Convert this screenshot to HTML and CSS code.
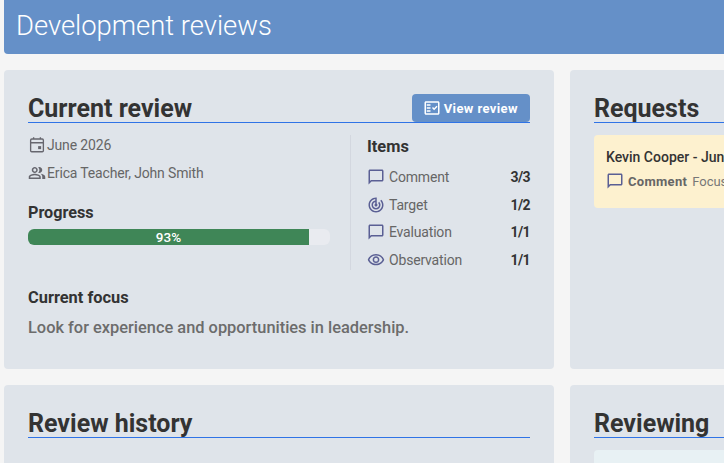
FILE: index.html
```html
<!DOCTYPE html>
<html lang="en">
<head>
<meta charset="utf-8">
<title>Development reviews</title>
<link rel="stylesheet" href="styles.css">
</head>
<body>
<div class="page">
  <header class="topbar"><h1>Development reviews</h1></header>
  <main class="grid">
    <section class="card">
      <div class="card-head">
        <h2>Current review</h2>
        <a class="btn">
          <svg class="btn-icon" viewBox="0 0 24 24"><path fill="currentColor" d="M20 3H4c-1.100 0-2 .9-2 2v14c0 1.100.9 2 2 2h16c1.100 0 2-.9 2-2V5c0-1.100-.9-2-2-2zm0 16H4V5h16v14zM19.410 10.420L17.990 9l-3.170 3.170-1.410-1.420L12 12.160 14.820 15zM5 7h5v2H5zM5 11h5v2H5zM5 15h5v2H5z"/></svg>
          View review
        </a>
      </div>
      <div class="cols">
        <div class="left">
          <div class="meta">
            <svg class="meta-icon" viewBox="0 0 24 24"><path fill="none" stroke="currentColor" stroke-width="1.800" d="M5 4h14a1.500 1.500 0 0 1 1.500 1.500v14A1.500 1.500 0 0 1 19 21H5a1.500 1.500 0 0 1-1.500-1.500v-14A1.500 1.500 0 0 1 5 4zM3.500 9h17M7.500 1.500V5M16.500 1.500V5"/><rect x="13.500" y="13.500" width="4" height="4" fill="currentColor"/></svg>
            June 2026
          </div>
          <div class="meta meta-people">
            <svg class="meta-icon" viewBox="0 0 24 24"><path fill="currentColor" d="M16.670 13.130C18.040 14.060 19 15.320 19 17v3h4v-3c0-2.180-3.570-3.470-6.330-3.870zM15 12c2.210 0 4-1.790 4-4s-1.790-4-4-4c-.47 0-.91.100-1.330.240a5.980 5.980 0 0 1 0 7.520c.420.140.860.240 1.330.240zM9 12c2.210 0 4-1.790 4-4s-1.790-4-4-4-4 1.790-4 4 1.790 4 4 4zm0-6c1.100 0 2 .9 2 2s-.9 2-2 2-2-.9-2-2 .9-2 2-2zM9 13c-2.670 0-8 1.340-8 4v3h16v-3c0-2.660-5.330-4-8-4zm6 5H3v-.990C3.200 16.290 6.300 15 9 15s5.800 1.290 6 2v1z"/></svg>
            Erica Teacher, John Smith
          </div>
          <h3 class="progress-title">Progress</h3>
          <div class="track"><div class="fill" style="width:93%">93%</div></div>
        </div>
        <div class="items">
          <h3>Items</h3>
          <ul>
            <li>
              <svg class="item-icon" viewBox="0 0 24 24"><path fill="currentColor" d="M20 2H4c-1.100 0-2 .9-2 2v18l4-4h14c1.100 0 2-.9 2-2V4c0-1.100-.9-2-2-2zm0 14H5.170L4 17.170V4h16v12z"/></svg>
              <span class="item-name">Comment</span><b>3/3</b>
            </li>
            <li>
              <svg class="item-icon" viewBox="0 0 24 24"><path fill="currentColor" d="M19.070 4.930l-1.410 1.410C19.100 7.790 20 9.790 20 12c0 4.420-3.580 8-8 8s-8-3.580-8-8c0-4.080 3.050-7.440 7-7.930v2.020C8.160 6.570 6 9.030 6 12c0 3.310 2.690 6 6 6s6-2.690 6-6c0-1.660-.67-3.160-1.760-4.240l-1.410 1.410C15.550 9.900 16 10.900 16 12c0 2.210-1.790 4-4 4s-4-1.790-4-4c0-1.860 1.280-3.410 3-3.860v2.140c-.6.350-1 .98-1 1.720 0 1.100.9 2 2 2s2-.9 2-2c0-.74-.4-1.380-1-1.720V2h-1C6.480 2 2 6.480 2 12s4.480 10 10 10 10-4.480 10-10c0-2.760-1.120-5.260-2.930-7.070z"/></svg>
              <span class="item-name">Target</span><b>1/2</b>
            </li>
            <li>
              <svg class="item-icon" viewBox="0 0 24 24"><path fill="currentColor" d="M20 2H4c-1.100 0-2 .9-2 2v18l4-4h14c1.100 0 2-.9 2-2V4c0-1.100-.9-2-2-2zm0 14H5.170L4 17.170V4h16v12z"/></svg>
              <span class="item-name">Evaluation</span><b>1/1</b>
            </li>
            <li>
              <svg class="item-icon" viewBox="0 0 24 24"><path fill="currentColor" d="M12 6a9.770 9.770 0 0 1 8.820 5.500C19.170 14.870 15.800 17 12 17s-7.170-2.130-8.820-5.500A9.770 9.770 0 0 1 12 6m0-2C7 4 2.730 7.110 1 11.500 2.730 15.890 7 19 12 19s9.270-3.110 11-7.500C21.270 7.110 17 4 12 4zm0 5a2.500 2.500 0 1 1 0 5 2.500 2.500 0 0 1 0-5m0-2c-2.480 0-4.500 2.020-4.500 4.500S9.520 16 12 16s4.500-2.020 4.500-4.500S14.480 7 12 7z"/></svg>
              <span class="item-name">Observation</span><b>1/1</b>
            </li>
          </ul>
        </div>
      </div>
      <h3 class="focus-title">Current focus</h3>
      <p class="focus">Look for experience and opportunities in leadership.</p>
    </section>

    <section class="card">
      <div class="card-head"><h2>Requests</h2></div>
      <div class="request">
        <div class="request-title">Kevin Cooper - June 2026</div>
        <div class="request-row">
          <svg class="item-icon" viewBox="0 0 24 24"><path fill="currentColor" d="M20 2H4c-1.100 0-2 .9-2 2v18l4-4h14c1.100 0 2-.9 2-2V4c0-1.100-.9-2-2-2zm0 14H5.170L4 17.170V4h16v12z"/></svg>
          <b>Comment</b><span class="request-text">Focus on the next steps for this review</span>
        </div>
      </div>
    </section>

    <section class="card">
      <div class="card-head"><h2>Review history</h2></div>
    </section>

    <section class="card">
      <div class="card-head"><h2>Reviewing</h2></div>
      <div class="reviewing-item"></div>
    </section>
  </main>
</div>
</body>
</html>
```

FILE: styles.css
```css
html, body {
  margin: 0;
  height: 463px;
  overflow: hidden;
  background: #f5f5f5;
}
body {
  font-family: Roboto, "Liberation Sans", sans-serif;
  color: #333;
}
.page {
  width: 1116px;
  margin-left: 4px;
}
.topbar {
  height: 54px;
  background: #6590c8;
  border-radius: 0 0 4px 4px;
  padding: 0 12px 2px;
  box-sizing: border-box;
  display: flex;
  align-items: center;
}
.topbar h1 {
  margin: 0;
  font-size: 27.400px;
  font-weight: 300;
  color: #fff;
  line-height: 50px;
}
.grid {
  display: grid;
  grid-template-columns: 550px 550px;
  grid-template-rows: 299px 200px;
  gap: 16px;
  margin-top: 16px;
}
.card {
  background: #dfe4ea;
  border-radius: 4px;
  padding: 24px;
  box-sizing: border-box;
}
.card-head {
  display: flex;
  justify-content: space-between;
  align-items: flex-end;
  height: 28px;
  border-bottom: 1px solid #2f73e6;
}
.card-head h2 {
  margin: 0;
  font-size: 25px;
  font-weight: 700;
  line-height: 26px;
  color: #333;
}
.btn {
  display: flex;
  align-items: center;
  gap: 3px;
  height: 28px;
  padding: 0 12px 0 11px;
  background: #6590c8;
  border-radius: 4px;
  color: #fff;
  font-size: 13px;
  font-weight: 700;
  letter-spacing: .4px;
}
.btn-icon {
  width: 18px;
  height: 18px;
}
.cols {
  display: flex;
  margin-top: 12px;
}
.left {
  width: 302px;
  flex: none;
}
.meta {
  display: flex;
  align-items: center;
  gap: 1px;
  height: 20px;
  font-size: 14px;
  letter-spacing: -.16px;
  line-height: 20px;
  color: #666;
}
.meta-people {
  margin-top: 8px;
}
.meta-icon {
  width: 18px;
  height: 18px;
  flex: none;
  color: #66666e;
}
.progress-title {
  margin: 20px 0 7px;
  font-size: 16.200px;
  font-weight: 700;
  line-height: 19px;
}
.track {
  height: 16px;
  background: #e9ebf0;
  border-radius: 6px;
  overflow: hidden;
}
.fill {
  height: 100%;
  background: #3f8657;
  color: #fff;
  font-size: 13.500px;
  font-weight: 500;
  line-height: 16px;
  text-align: center;
}
.items {
  flex: 1;
  margin-left: 20px;
  padding: 2px 0 0 16px;
  border-left: 1px solid #d3d7df;
  height: 133px;
}
.items h3 {
  margin: 0;
  font-size: 16.400px;
  font-weight: 700;
  line-height: 20px;
}
.items ul {
  list-style: none;
  margin: 6px 0 0;
  padding: 0;
}
.items li {
  display: flex;
  align-items: center;
  height: 27.700px;
  font-size: 14px;
  letter-spacing: -.18px;
  color: #666;
}
.items li b {
  margin-left: auto;
  color: #333;
  font-weight: 700;
  letter-spacing: -.6px;
}
.item-icon {
  width: 18px;
  height: 18px;
  flex: none;
  color: #5a5f94;
}
.item-name {
  margin-left: 4px;
}
.focus-title {
  margin: 18px 0 0;
  font-size: 16.400px;
  font-weight: 700;
  line-height: 20px;
}
.focus {
  margin: 10px 0 0;
  font-size: 16.400px;
  font-weight: 500;
  line-height: 20px;
  color: #6c6c6c;
}
.request {
  margin-top: 12px;
  height: 73px;
  box-sizing: border-box;
  padding: 13px 12px;
  background: #fdf1cf;
  border-radius: 4px;
  white-space: nowrap;
  overflow: hidden;
}
.request-title {
  font-size: 14px;
  font-weight: 500;
  line-height: 18px;
  color: #333;
}
.request-row {
  display: flex;
  align-items: center;
  gap: 4px;
  margin-top: 6px;
  font-size: 13px;
  color: #777;
}
.request-row b {
  color: #666;
  letter-spacing: .3px;
}
.request-text {
  margin-left: 1px;
}
.reviewing-item {
  margin-top: 12px;
  height: 73px;
  background: #e8f1f4;
  border-radius: 4px;
}
```
